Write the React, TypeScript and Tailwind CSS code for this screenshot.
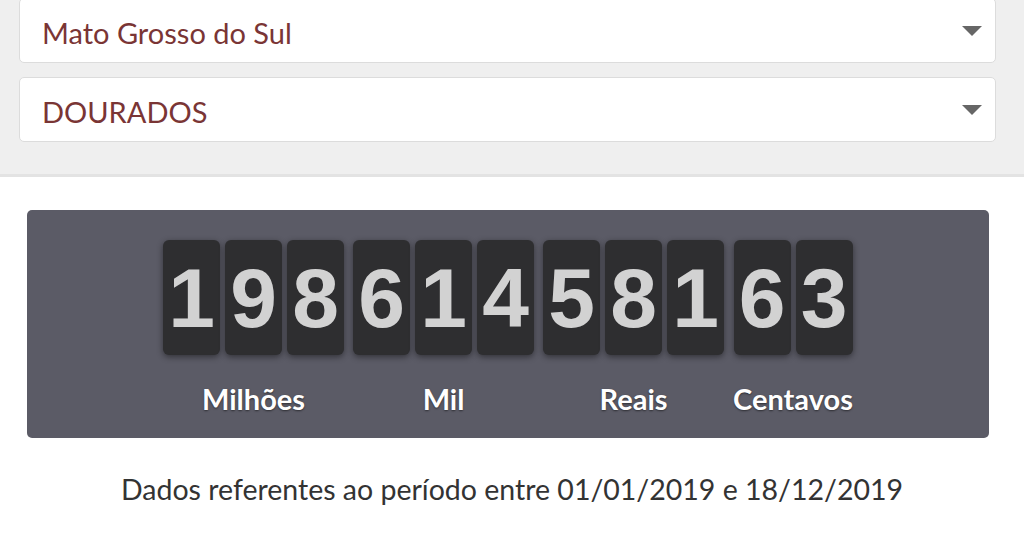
const groups = [
  { digits: ["1", "9", "8"], label: "Milhões" },
  { digits: ["6", "1", "4"], label: "Mil" },
  { digits: ["5", "8", "1"], label: "Reais" },
  { digits: ["6", "3"], label: "Centavos" },
];

const Select = ({ value }: { value: string }) => (
  <div className="h-[65px] bg-white border border-[#dcdcdc] rounded-[5px] flex items-center justify-between pl-[22px] pr-[13px]">
    <span className="text-[29px] leading-none pt-[3px] text-[#7a3535]">{value}</span>
    <span className="w-0 h-0 border-l-[10px] border-r-[10px] border-t-[10px] border-l-transparent border-r-transparent border-t-[#666]" />
  </div>
);

const App = () => {
  return (
    <div className="w-[1024px] h-[544px] overflow-hidden bg-white font-['Lato',sans-serif]">
      <div className="bg-[#efefef] h-[177px] border-b-[3px] border-[#e3e3e3] pl-[19px] pr-[28px] flex flex-col">
        <div className="-mt-[2px] flex flex-col gap-[14px]">
          <Select value="Mato Grosso do Sul" />
          <Select value="DOURADOS" />
        </div>
      </div>

      <div className="mt-[33px] ml-[27px] w-[962px] h-[228px] bg-[#5b5b66] rounded-[5px] pt-[30px] flex justify-center gap-[9px]">
        {groups.map((g) => (
          <div key={g.label} className="flex flex-col items-center">
            <div className="flex gap-[5px]">
              {g.digits.map((d, i) => (
                <div
                  key={i}
                  className="w-[57px] h-[115px] bg-[#2e2e30] rounded-[6px] shadow-[0_2px_6px_rgba(0,0,0,0.45)] flex items-center justify-center text-[84px] font-bold text-[#d2d2d2] font-['Liberation_Sans',Arial,sans-serif] leading-none"
                >
                  {d}
                </div>
              ))}
            </div>
            <div className="mt-[29px] text-[29px] font-bold text-white [text-shadow:0_1px_2px_rgba(0,0,0,0.5)] leading-none">
              {g.label}
            </div>
          </div>
        ))}
      </div>

      <p className="mt-[30px] text-center text-[28.5px] text-[#333]">
        Dados referentes ao período entre 01/01/2019 e 18/12/2019
      </p>
    </div>
  );
};

export default App;
